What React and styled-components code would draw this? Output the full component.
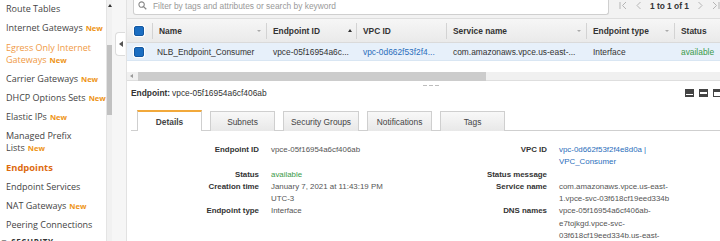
import React from 'react'
import styled, { createGlobalStyle } from 'styled-components'

const GlobalStyle = createGlobalStyle`
  html, body { margin: 0; padding: 0; background: #fff; overflow: hidden; }
  body { font-family: "Liberation Sans", Arial, sans-serif; }
  * { box-sizing: border-box; }
`

const Page = styled.div`
  display: flex;
  width: 720px;
  height: 241px;
  overflow: hidden;
`

/* ---------- sidebar ---------- */

const Sidebar = styled.div`
  display: flex;
  width: 112px;
  flex-shrink: 0;
`

const NavList = styled.ul`
  list-style: none;
  margin: 0;
  padding: 0 0 0 6px;
  flex: 1;
  font-family: "Open Sans", sans-serif;
  font-size: 9px;
  line-height: 12.3px;
  color: #444;
`

const NavItem = styled.li`
  padding: 3.4px 0;
  white-space: nowrap;
  color: ${p => (p.$active ? '#dd6b10' : p.$hover ? '#f09a45' : '#444')};
  font-weight: ${p => (p.$active ? 700 : 400)};
  font-size: ${p => (p.$active ? '9.4px' : '9px')};
`

const NewBadge = styled.span`
  color: #ee9416;
  font-weight: 700;
  font-size: 7.6px;
  margin-left: 3px;
`

const SectionHead = styled.li`
  margin: 2px 0 0 -6px;
  font-weight: 700;
  color: #333;
  font-size: 8px;
  letter-spacing: 0.6px;
  white-space: nowrap;
`

const VScroll = styled.div`
  width: 7px;
  background: #f1f1f1;
  border-left: 1px solid #e4e4e4;
  display: flex;
  flex-direction: column;
  align-items: center;
`

const ArrowUp = styled.span`
  width: 0;
  height: 0;
  margin-top: 4px;
  border-left: 2.5px solid transparent;
  border-right: 2.5px solid transparent;
  border-bottom: 3px solid #333;
`

const VThumb = styled.div`
  width: 6px;
  height: 70px;
  margin-top: 38px;
  background: #c1c1c1;
`

const Gutter = styled.div`
  width: 14px;
  flex-shrink: 0;
  background: #f6f6f6;
  padding-top: 32px;
`

const CollapseTab = styled.div`
  width: 10px;
  height: 24px;
  margin-left: 3px;
  background: #fff;
  border: 1px solid #dcdcdc;
  border-right: none;
  border-radius: 4px 0 0 4px;
  display: flex;
  align-items: center;
  justify-content: flex-end;
  padding-right: 2px;
`

const ArrowLeft = styled.span`
  width: 0;
  height: 0;
  border-top: ${p => p.$s || 3}px solid transparent;
  border-bottom: ${p => p.$s || 3}px solid transparent;
  border-right: ${p => (p.$s || 3) + 1}px solid ${p => p.$c || '#666'};
`

/* ---------- main ---------- */

const Main = styled.div`
  flex: 1;
  min-width: 0;
  display: flex;
  flex-direction: column;
  border-left: 1px solid #e2e2e2;
  font-size: 8.4px;
  color: #333;

  & > * { flex-shrink: 0; }
`

const TopBar = styled.div`
  height: 18px;
  background: #f2f2f2;
  display: flex;
  align-items: flex-start;
  padding-left: 6px;
`

const SearchBox = styled.div`
  width: 481px;
  height: 15px;
  background: #fff;
  border: 1px solid #cfcfcf;
  border-top: none;
  border-radius: 0 0 3px 3px;
  display: flex;
  align-items: center;
  padding: 0 0 3px 4px;
  color: #999;
  gap: 6px;
  white-space: nowrap;
`

const Pager = styled.div`
  display: flex;
  align-items: center;
  height: 11px;
  margin-left: 10px;
  gap: 9px;
  white-space: nowrap;
`

const PagerText = styled.span`
  font-weight: 700;
  color: #333;
`

const Table = styled.div`
  display: flex;
  flex-direction: column;

  & > * { flex-shrink: 0; }
`

const HeadRow = styled.div`
  display: flex;
  align-items: center;
  height: 25px;
  background: linear-gradient(#f6f6f6, #eaeaea);
  border-top: 1px solid #dddddd;
  border-bottom: 1px solid #dadada;
`

const DataRow = styled.div`
  display: flex;
  align-items: center;
  height: 18px;
  background: #e7f0fa;
  border-bottom: 1px solid #d9e6f3;
`

const Cell = styled.div`
  width: ${p => (p.$w ? `${p.$w}px` : 'auto')};
  flex: ${p => (p.$w ? '0 0 auto' : '1')};
  display: flex;
  align-items: center;
  padding-left: ${p => (p.$pad != null ? p.$pad : 6)}px;
  white-space: nowrap;
  overflow: hidden;
  color: ${p => p.$color || '#333'};
`

const HeadCell = styled(Cell)`
  height: 16px;
  font-weight: 700;
  border-left: 1px solid #d3d3d3;
`

const CheckCell = styled.div`
  width: 25px;
  flex-shrink: 0;
  padding-left: 7px;
  display: flex;
  align-items: center;
`

const Checkbox = styled.span`
  width: 10px;
  height: 10px;
  border-radius: 2px;
  background: #1b6ec2;
  border: 1px solid #1558a0;
  box-shadow: 0 0 0 1px #fff;
`

const Caret = styled.span`
  margin-left: auto;
  margin-right: ${p => p.$mr || 5}px;
  width: 0;
  height: 0;
  border-left: 2.5px solid transparent;
  border-right: 2.5px solid transparent;
  ${p =>
    p.$up
      ? 'border-bottom: 3px solid #333;'
      : 'border-top: 2.5px solid #aaa;'}
`

const BodyFill = styled.div`
  height: 11px;
  background: #fff;
`

const HScroll = styled.div`
  height: 9px;
  background: #f0f0f0;
  display: flex;
  align-items: center;
  padding-left: 3px;
  border-bottom: 1px solid #dedede;
`

const HThumb = styled.div`
  width: 348px;
  height: 9px;
  margin-left: 5px;
  background: #cccccc;
`

/* ---------- detail pane ---------- */

const Pane = styled.div`
  padding: 0 0 0 4px;
  display: flex;
  flex-direction: column;

  & > * { flex-shrink: 0; }
`

const Grip = styled.div`
  height: 5px;
  display: flex;
  align-items: flex-end;
  gap: 2px;
  padding-left: 292px;
`

const GripDash = styled.span`
  width: 4px;
  height: 1px;
  background: #bdbdbd;
`

const TitleRow = styled.div`
  height: 14px;
  display: flex;
  align-items: center;
  white-space: nowrap;
`

const TitleLabel = styled.b`
  font-weight: 700;
  margin-right: 2px;
`

const LayoutIcons = styled.div`
  margin-left: auto;
  display: flex;
  gap: 5px;
  margin-right: -2px;
`

const TabBar = styled.div`
  display: flex;
  gap: 8px;
  margin-top: 11px;
  padding-left: 6px;
  border-bottom: 1px solid #cfcfcf;
`

const Tab = styled.div`
  min-width: 65px;
  padding: 0 7px;
  display: flex;
  align-items: center;
  justify-content: center;
  white-space: nowrap;
  border: 1px solid #cfcfcf;
  border-bottom: none;
  margin-bottom: -1px;
  color: #444;
  background: ${p => (p.$active ? '#fff' : 'linear-gradient(#f8f8f8, #e8e8e8)')};
  border-top: ${p => (p.$active ? '2px solid #f2a93b' : '1px solid #cfcfcf')};
  font-weight: ${p => (p.$active ? 700 : 400)};
  height: ${p => (p.$active ? '21px' : '20px')};
  margin-top: ${p => (p.$active ? '-1px' : '0')};
`

const Grid = styled.div`
  display: grid;
  grid-template-columns: 128px 130px 134px 1fr;
  column-gap: 12px;
  margin-top: 13px;
  font-size: 7.9px;
  line-height: 12.3px;
`

const Label = styled.div`
  text-align: right;
  font-weight: 700;
  color: #333;
  white-space: nowrap;
`

const Value = styled.div`
  color: ${p => p.$color || '#555'};
  white-space: nowrap;
`

/* ---------- drawings ---------- */

const SearchIcon = () => (
  <svg width="9" height="9" viewBox="0 0 10 10">
    <circle cx="4" cy="4" r="3" fill="none" stroke="#888" strokeWidth="1.2" />
    <line x1="6.2" y1="6.2" x2="9.2" y2="9.2" stroke="#888" strokeWidth="1.4" />
  </svg>
)

const PageIcon = ({ dir, bar }) => {
  const left = dir === 'left'
  return (
    <svg width={bar ? 8 : 5} height="9" viewBox={bar ? '0 0 8 9' : '0 0 5 9'}>
      {bar && <line x1={left ? 1 : 7} y1="1" x2={left ? 1 : 7} y2="8" stroke="#b5b5b5" strokeWidth="1" />}
      <polyline
        points={
          left
            ? `${bar ? 7 : 4.5},1 ${bar ? 3.5 : 1},4.5 ${bar ? 7 : 4.5},8`
            : `${bar ? 1 : 0.5},1 ${bar ? 4.5 : 4},4.5 ${bar ? 1 : 0.5},8`
        }
        fill="none"
        stroke="#b5b5b5"
        strokeWidth="1"
      />
    </svg>
  )
}

const PanelIcon = ({ kind }) => (
  <svg width="9" height="8" viewBox="0 0 9 8">
    <rect x="0.5" y="0.5" width="8" height="7" fill="#fff" stroke="#444" />
    {kind === 0 && <rect x="0.5" y="0.5" width="8" height="4.5" fill="#444" />}
    {kind === 0 && <rect x="0.5" y="6" width="8" height="1.5" fill="#444" />}
    {kind === 1 && <rect x="0.5" y="0.5" width="8" height="2.5" fill="#444" />}
    {kind === 1 && <rect x="0.5" y="5" width="8" height="2.5" fill="#444" />}
    {kind === 2 && <rect x="0.5" y="0.5" width="8" height="2.5" fill="#444" />}
  </svg>
)

/* ---------- data ---------- */

const navItems = [
  { label: 'Route Tables' },
  { label: 'Internet Gateways', isNew: true },
  { label: ['Egress Only Internet', 'Gateways'], isNew: true, hover: true },
  { label: 'Carrier Gateways', isNew: true },
  { label: 'DHCP Options Sets', isNew: true },
  { label: 'Elastic IPs', isNew: true },
  { label: ['Managed Prefix', 'Lists'], isNew: true },
  { label: 'Endpoints', active: true },
  { label: 'Endpoint Services' },
  { label: 'NAT Gateways', isNew: true },
  { label: 'Peering Connections' },
]

const columns = [
  { title: 'Name', w: 114, caret: 'down' },
  { title: 'Endpoint ID', w: 90, caret: 'up' },
  { title: 'VPC ID', w: 90 },
  { title: 'Service name', w: 140, caret: 'down' },
  { title: 'Endpoint type', w: 88, caret: 'down' },
  { title: 'Status' },
]

const row = [
  { text: 'NLB_Endpoint_Consumer' },
  { text: 'vpce-05f16954a6c...' },
  { text: 'vpc-0d662f53f2f4...', color: '#2a6ebb' },
  { text: 'com.amazonaws.vpce.us-east-...' },
  { text: 'Interface' },
  { text: 'available', color: '#3a9a48' },
]

const details = [
  ['Endpoint ID', ['vpce-05f16954a6cf406ab'], 'VPC ID', ['vpc-0d662f53f2f4e8d0a |', 'VPC_Consumer'], '#2a6ebb'],
  ['Status', ['available'], 'Status message', [''], null, '#3a9a48'],
  ['Creation time', ['January 7, 2021 at 11:43:19 PM', 'UTC-3'], 'Service name', ['com.amazonaws.vpce.us-east-', '1.vpce-svc-03f618cf19eed334b']],
  ['Endpoint type', ['Interface'], 'DNS names', ['vpce-05f16954a6cf406ab-', 'e7tojkgd.vpce-svc-', '03f618cf19eed334b.us-east-', '1.vpce.amazonaws.com']],
]

const tabs = ['Details', 'Subnets', 'Security Groups', 'Notifications', 'Tags']

const Lines = ({ lines }) =>
  lines.map((l, i) => (
    <React.Fragment key={i}>
      {i > 0 && <br />}
      {l}
    </React.Fragment>
  ))

export default function App() {
  return (
    <>
      <GlobalStyle />
      <Page>
        <Sidebar>
          <NavList>
            {navItems.map((item, i) => {
              const lines = Array.isArray(item.label) ? item.label : [item.label]
              return (
                <NavItem key={i} $active={item.active} $hover={item.hover}>
                  <Lines lines={lines} />
                  {item.isNew && <NewBadge>New</NewBadge>}
                </NavItem>
              )
            })}
            <SectionHead>▼ SECURITY</SectionHead>
          </NavList>
          <VScroll>
            <ArrowUp />
            <VThumb />
          </VScroll>
        </Sidebar>

        <Gutter>
          <CollapseTab>
            <ArrowLeft $s={3} $c="#555" />
          </CollapseTab>
        </Gutter>

        <Main>
          <TopBar>
            <SearchBox>
              <SearchIcon />
              Filter by tags and attributes or search by keyword
            </SearchBox>
            <Pager>
              <PageIcon dir="left" bar />
              <PageIcon dir="left" />
              <PagerText>1 to 1 of 1</PagerText>
              <PageIcon dir="right" />
              <PageIcon dir="right" bar />
            </Pager>
          </TopBar>

          <Table>
            <HeadRow>
              <CheckCell>
                <Checkbox />
              </CheckCell>
              {columns.map(c => (
                <HeadCell key={c.title} $w={c.w}>
                  {c.title}
                  {c.caret && <Caret $up={c.caret === 'up'} $mr={c.caret === 'up' ? 4 : 5} />}
                </HeadCell>
              ))}
            </HeadRow>
            <DataRow>
              <CheckCell>
                <Checkbox />
              </CheckCell>
              {row.map((r, i) => (
                <Cell key={i} $w={columns[i].w} $color={r.color} $pad={i === 0 ? 5 : 7}>
                  {r.text}
                </Cell>
              ))}
            </DataRow>
            <BodyFill />
            <HScroll>
              <ArrowLeft $s={2} $c="#999" />
              <HThumb />
            </HScroll>
          </Table>

          <Pane>
            <Grip>
              <GripDash />
              <GripDash />
              <GripDash />
            </Grip>
            <TitleRow>
              <TitleLabel>Endpoint:</TitleLabel> vpce-05f16954a6cf406ab
              <LayoutIcons>
                <PanelIcon kind={0} />
                <PanelIcon kind={1} />
                <PanelIcon kind={2} />
              </LayoutIcons>
            </TitleRow>
            <TabBar>
              {tabs.map((t, i) => (
                <Tab key={t} $active={i === 0}>
                  {t}
                </Tab>
              ))}
            </TabBar>
            <Grid>
              {details.map(([l1, v1, l2, v2, c2, c1]) => (
                <React.Fragment key={l1}>
                  <Label>{l1}</Label>
                  <Value $color={c1}>
                    <Lines lines={v1} />
                  </Value>
                  <Label>{l2}</Label>
                  <Value $color={c2}>
                    <Lines lines={v2} />
                  </Value>
                </React.Fragment>
              ))}
            </Grid>
          </Pane>
        </Main>
      </Page>
    </>
  )
}
